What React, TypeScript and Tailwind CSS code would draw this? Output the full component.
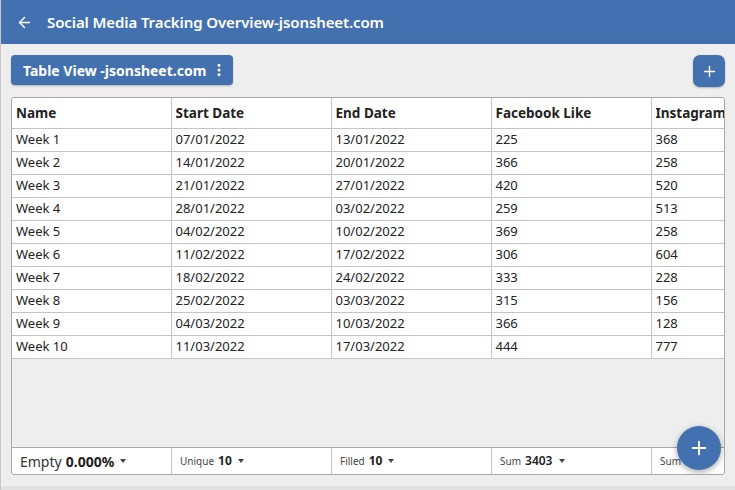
import { ArrowLeft, EllipsisVertical, Plus } from "lucide-react";

const rows = [
  ["Week 1", "07/01/2022", "13/01/2022", "225", "368"],
  ["Week 2", "14/01/2022", "20/01/2022", "366", "258"],
  ["Week 3", "21/01/2022", "27/01/2022", "420", "520"],
  ["Week 4", "28/01/2022", "03/02/2022", "259", "513"],
  ["Week 5", "04/02/2022", "10/02/2022", "369", "258"],
  ["Week 6", "11/02/2022", "17/02/2022", "306", "604"],
  ["Week 7", "18/02/2022", "24/02/2022", "333", "228"],
  ["Week 8", "25/02/2022", "03/03/2022", "315", "156"],
  ["Week 9", "04/03/2022", "10/03/2022", "366", "128"],
  ["Week 10", "11/03/2022", "17/03/2022", "444", "777"],
];

const columns = ["Name", "Start Date", "End Date", "Facebook Like", "Instagram"];

function Caret() {
  return <span className="ml-1.5 inline-block border-x-[3px] border-t-[4px] border-x-transparent border-t-[#444] align-middle" />;
}

export default function App() {
  return (
    <div
      className="flex h-[490px] w-[735px] flex-col overflow-hidden border-l border-[#c8c8c8] bg-[#eeeeee] text-[#222]"
      style={{ fontFamily: '"Noto Sans", "Open Sans", sans-serif' }}
    >
      {/* top bar */}
      <header className="flex h-[44px] shrink-0 items-center bg-[#4371b0] text-white">
        <ArrowLeft className="ml-[15px] size-[17px]" strokeWidth={2} />
        <h1 className="ml-[14px] text-[15px] font-semibold tracking-[-0.1px]">
          Social Media Tracking Overview-jsonsheet.com
        </h1>
      </header>

      {/* toolbar */}
      <div className="flex items-start justify-between px-[10px] pt-[11px]">
        <button className="flex h-[30px] items-center rounded-[4px] bg-[#4371b0] pl-[12px] pr-[6px] text-[14px] font-bold text-white shadow-[0_1px_2px_rgba(0,0,0,0.25)]">
          Table View -jsonsheet.com
          <EllipsisVertical className="ml-[5px] size-[16px]" strokeWidth={2.5} />
        </button>
        <button className="flex size-[32px] items-center justify-center rounded-[7px] bg-[#4371b0] text-white shadow-[0_1px_2px_rgba(0,0,0,0.25)]">
          <Plus className="size-[17px]" strokeWidth={2} />
        </button>
      </div>

      {/* table */}
      <div className="relative mx-[10px] mt-[10px] flex h-[378px] flex-col overflow-hidden rounded-[3px] border border-[#a8a8a8]">
        <div className="flex-1 overflow-hidden">
          <table className="w-[799px] table-fixed border-collapse bg-white text-[13px]">
            <thead>
              <tr className="h-[30px]">
                {columns.map((c, i) => (
                  <th
                    key={c}
                    className={`${i === 0 ? "w-[159px]" : "w-[160px]"} border-r border-b border-[#c4c4c4] px-[4px] text-left text-[13.5px] font-bold whitespace-nowrap`}
                  >
                    {c}
                  </th>
                ))}
              </tr>
            </thead>
            <tbody>
              {rows.map((r) => (
                <tr key={r[0]} className="h-[23px]">
                  {r.map((v, i) => (
                    <td
                      key={i}
                      className="border-r border-b border-[#c4c4c4] px-[4px] leading-none whitespace-nowrap"
                    >
                      {v}
                    </td>
                  ))}
                </tr>
              ))}
            </tbody>
          </table>
        </div>

        {/* footer summary */}
        <div className="flex h-[27px] w-[800px] shrink-0 border-t border-[#a8a8a8] bg-white text-[10px] text-[#444]">
          <div className="flex w-[160px] items-center border-r border-[#c4c4c4] px-[8px] text-[14px] text-[#333]">
            Empty <b className="ml-1 text-[#222]">0.000%</b>
            <Caret />
          </div>
          <div className="flex w-[160px] items-center border-r border-[#c4c4c4] px-[8px]">
            Unique <b className="ml-1 text-[12px] text-[#222]">10</b>
            <Caret />
          </div>
          <div className="flex w-[160px] items-center border-r border-[#c4c4c4] px-[8px]">
            Filled <b className="ml-1 text-[12px] text-[#222]">10</b>
            <Caret />
          </div>
          <div className="flex w-[160px] items-center border-r border-[#c4c4c4] px-[8px]">
            Sum <span className="ml-1 text-[12px] font-semibold text-[#222]">3403</span>
            <Caret />
          </div>
          <div className="flex w-[160px] items-center px-[8px]">
            Sum
          </div>
        </div>

        {/* floating add button */}
        <button className="absolute right-[3px] bottom-[4px] flex size-[44px] items-center justify-center rounded-full bg-[#4371b0] text-white shadow-[0_2px_6px_rgba(0,0,0,0.35)]">
          <Plus className="size-[22px]" strokeWidth={2} />
        </button>
      </div>

      <div className="mt-auto h-[4px] bg-[#e2e2e2]" />
    </div>
  );
}
